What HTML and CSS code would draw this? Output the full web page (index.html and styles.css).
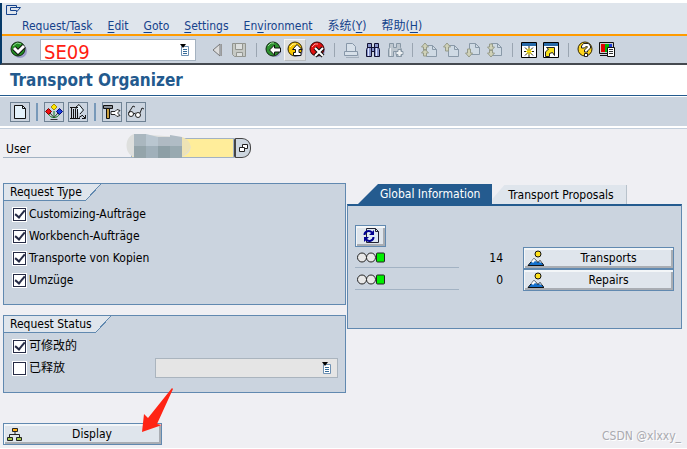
FILE: index.html
```html
<!DOCTYPE html>
<html lang="en">
<head>
<meta charset="utf-8">
<title>Transport Organizer</title>
<link rel="stylesheet" href="styles.css">
</head>
<body>
<header class="shell">
  <div class="menubar">
    <svg class="window-icon" width="15" height="10" viewBox="0 0 15 10" fill="none" stroke="#15428b"><path d="M10.500 2.500V.5H.5v9h10V7.500M4.500 2.500h10l-4 4.500V5.500h-6z"/></svg>
    <nav class="menus">
      <a href="#">Request/T<u>a</u>sk</a><a href="#"><u>E</u>dit</a><a href="#"><u>G</u>oto</a><a href="#"><u>S</u>ettings</a><a href="#">En<u>v</u>ironment</a><a href="#">系统(<u>Y</u>)</a><a href="#">帮助(<u>H</u>)</a>
    </nav>
  </div>
  <div class="toolbar">
    <button class="tool" aria-label="Enter"><svg width="18" height="18" viewBox="0 0 18 18"><circle cx="10" cy="10" r="7" fill="#9a9ac8"/><circle cx="8" cy="8" r="7" fill="#229122" stroke="#102810"/><path d="M3 5l4-3 4 1" stroke="#8fd88f" fill="none"/><path d="M4 7l4 4 6-6" fill="none" stroke="#111" stroke-width="5"/><path d="M4 7l4 4 6-6" fill="none" stroke="#fff" stroke-width="3"/></svg></button>
    <div class="command"><input class="command-input" aria-label="Command" value="SE09"><svg class="list-icon" width="10" height="12" viewBox="0 0 10 12"><path d="M1.500 2.500h7v9h-7z" fill="#fff" stroke="#6e91b3"/><path d="M3 5.500h4M3 7.500h4M3 9.500h4" stroke="#356b99"/><path d="M0 0h6L3 4z"/></svg></div>
    <button class="tool" aria-label="Collapse"><svg width="16" height="16" viewBox="0 0 16 16"><path d="M11 2v12L4 8z" fill="#ddd" stroke="#777"/><path d="M12.500 2v12" stroke="#999"/></svg></button>
    <button class="tool" aria-label="Save"><svg width="16" height="16" viewBox="0 0 16 16" fill="#c6c9c4" stroke="#92958f"><path d="M1.500 1.500h13v13h-11l-2-2z"/><path d="M4.500 1.500h7v6h-7zM5.500 10.500h6v4h-6z" fill="#dde0df"/></svg></button>
    <span class="sep"></span>
    <button class="tool" aria-label="Back"><svg width="17" height="17" viewBox="0 0 17 17"><circle cx="10" cy="10" r="6" fill="#9d9dcb"/><circle cx="8" cy="8" r="7" fill="#2d912f" stroke="#102810"/><path d="M3 5l3-3h3" stroke="#9cdb9a" fill="none"/><path d="M4.500 9l5-5v3h6v4h-6v3z" fill="#fff" stroke="#111"/></svg></button>
    <button class="tool tool-hover" aria-label="Exit"><svg width="17" height="17" viewBox="0 0 17 17"><circle cx="10" cy="10" r="6" fill="#9d9dcb"/><circle cx="8" cy="8" r="7" fill="#f6c500" stroke="#302500"/><path d="M3 6l3-3h3" stroke="#fff7a0" fill="none"/><path d="M10 3.500l5 5h-3v3h2v3H6.500v-3h2v-3h-3z" fill="#fff" stroke="#111"/></svg></button>
    <button class="tool" aria-label="Cancel"><svg width="17" height="17" viewBox="0 0 17 17"><circle cx="10" cy="10" r="6" fill="#9d9dcb"/><circle cx="8" cy="8" r="7" fill="#df1010" stroke="#300"/><path d="M3 6l3-3h3" stroke="#ff9d9d" fill="none"/><path d="M6 7l8 8M14 7l-8 8" stroke="#111" stroke-width="4"/><path d="M6 7l8 8M14 7l-8 8" stroke="#fff" stroke-width="2"/></svg></button>
    <span class="sep"></span>
    <button class="tool" aria-label="Print"><svg width="16" height="16" viewBox="0 0 16 16" fill="#d7e0e9" stroke="#8797a8"><path d="M3.500 9.500v-8h6l3 3v5"/><path d="M1.500 9.500h13v4h-13z"/><path d="M3 15.500h13v-4" fill="none" stroke="#a4b0bd"/></svg></button>
    <button class="tool" aria-label="Find"><svg width="16" height="16" viewBox="0 0 16 16" fill="#8794ca" stroke="#111133"><path d="M2.500 1.500h4v4h3v-4h4v4l1 2v7h-5v-5h-3v5h-5v-7l1-2z"/><path d="M3.500 6v8M11.500 6v8" stroke="#dfe5ff"/><path d="M6.500 5v5M9.500 5v5M2 5.500h5M9 5.500h5"/></svg></button>
    <button class="tool" aria-label="Find next"><svg width="17" height="16" viewBox="0 0 17 16" fill="#bdc6ce" stroke="#8797a5"><path d="M2.500 1.500h4v4h3v-4h4v4l1 2v7h-5v-5h-3v5h-5v-7l1-2z"/><path d="M3.500 6v8" stroke="#e8edf2"/><path d="M11 7.500h3v2h2v3h-2v2h-3v-2H9v-3h2z" fill="#edf0f2"/></svg></button>
    <span class="sep"></span>
    <button class="tool" aria-label="First page"><svg width="16" height="16" viewBox="0 0 16 16" fill="#cfdae4" stroke="#8999a8"><path d="M5.500 3.500h6l4 4v7h-10z"/><path d="M11.500 3.500v4h4" fill="none"/><path d="M4 1l3.500 4h-2v3h-3V5h-2zM4 7l3.500 4h-2v3h-3v-3h-2z" fill="#d0d2b8" stroke="#969b89"/></svg></button>
    <button class="tool" aria-label="Previous page"><svg width="16" height="16" viewBox="0 0 16 16" fill="#cfdae4" stroke="#8999a8"><path d="M5.500 3.500h6l4 4v7h-10z"/><path d="M11.500 3.500v4h4" fill="none"/><path d="M4 1l3.500 4h-2v4h-3V5h-2z" fill="#d0d2b8" stroke="#969b89"/></svg></button>
    <button class="tool" aria-label="Next page"><svg width="16" height="16" viewBox="0 0 16 16" fill="#cfdae4" stroke="#8999a8"><path d="M4.500 1.500h6l4 4v7h-10z"/><path d="M10.500 1.500v4h4" fill="none"/><path d="M4 15l3.500-4h-2V7h-3v4h-2z" fill="#d0d2b8" stroke="#969b89"/></svg></button>
    <button class="tool" aria-label="Last page"><svg width="16" height="16" viewBox="0 0 16 16" fill="#cfdae4" stroke="#8999a8"><path d="M4.500 1.500h6l4 4v8h-10z"/><path d="M10.500 1.500v4h4" fill="none"/><path d="M4 9l3.500-4h-2V2h-3v3h-2zM4 15l3.500-4h-2V8h-3v3h-2z" fill="#d0d2b8" stroke="#969b89"/></svg></button>
    <span class="sep"></span>
    <button class="tool" aria-label="New session"><svg width="16" height="16" viewBox="0 0 16 16"><path d="M.5.5h15v15H.5z" fill="#fff" stroke="#000"/><path d="M1 1h14v3H1z" fill="#286aa8"/><path d="M8 4v11M3 9.500h10M4 5.500l8 8M12 5.500l-8 8" stroke="#222"/><path d="M8 6v7M5 9.500h6M5.500 7l5 5M10.500 7l-5 5" stroke="#ffe400"/></svg></button>
    <button class="tool" aria-label="Create shortcut"><svg width="16" height="16" viewBox="0 0 16 16"><path d="M.5.5h15v15H.5z" fill="#fff" stroke="#000"/><path d="M1 1h14v3H1z" fill="#286aa8"/><path d="M2.500 14.500V10l3-3-2-1.500h8v8l-2-3-3 1v3z" fill="#f7e11b" stroke="#222"/></svg></button>
    <span class="sep"></span>
    <button class="tool" aria-label="Help"><svg width="17" height="17" viewBox="0 0 17 17"><circle cx="8" cy="8" r="7" fill="#ffd51b" stroke="#302500"/><path d="M4.500 7V5l2-2.500h5l2 2.500v2l-3 3v1h-3V9l3-3-1-1-2 2zM7.500 12.500h3v3h-3z" fill="#fff" stroke="#222"/></svg></button>
    <button class="tool" aria-label="Customize layout"><svg width="17" height="17" viewBox="0 0 17 17"><path d="M.5 1.500h14v11H.5z" fill="#ccc" stroke="#111"/><path d="M2 3h4v8H2z" fill="#e00000"/><path d="M6 3h4v8H6z" fill="#00b400"/><path d="M10 3h3v8h-3z" fill="#1539d8"/><path d="M1 14.500h9" stroke="#111"/><path d="M8.500 6.500h7v9h-7z" fill="#fff" stroke="#111"/><path d="M10 8.500h4M10 10.500h4M10 12.500h4" stroke="#333"/></svg></button>
  </div>
</header>
<h1 class="title">Transport Organizer</h1>
<div class="appbar">
  <button class="app-tool" aria-label="Create"><svg width="16" height="16" viewBox="0 0 16 16"><path d="M2.500 1.500h8l3 3v10h-11z" fill="#e4f2fb" stroke="#111"/><path d="M10.500 1.500v3h3" fill="none" stroke="#111"/></svg></button>
  <span class="app-sep"></span>
  <button class="app-tool" aria-label="Transport view"><svg width="18" height="16" viewBox="0 0 18 16"><path d="M9 7v6M3.500 9.500c1 3 3 4 5.500 4s4.500-1 5.500-4" fill="none" stroke="#0a7a1c"/><path d="M5.500 15.500h7M9 13.500L5 9M9 13.500L13 9" fill="none" stroke="#333"/><path d="M9 0l3 3-3 3-3-3z" fill="#ffe600" stroke="#a58b00"/><path d="M3.500 4.500l3 3-3 3-3-3z" fill="#f01010" stroke="#700"/><path d="M14.500 4.500l3 3-3 3-3-3z" fill="#1742e0" stroke="#007"/></svg></button>
  <button class="app-tool" aria-label="Release directly"><svg width="18" height="16" viewBox="0 0 18 16" fill="none" stroke="#111"><path d="M7 5V3l3-2.500L14.500 6 11 10" fill="#e4f2fb"/><path d="M1 3.500h8M2.500 4v10M4.500 5v9M6.500 5v9M8.500 5v9M1 14.500h10M10 13.500l3-2"/><path d="M13 11l3 3M16.500 11v3.500H13"/></svg></button>
  <span class="app-sep"></span>
  <button class="app-tool" aria-label="Tools"><svg width="18" height="16" viewBox="0 0 18 16"><path d="M8 7.500h4l2-2 3 1-2 2v1l2 2-3 1-2-2H8z" fill="#fff" stroke="#222"/><path d="M.5 1.500h9v3h-9z" fill="#8a9098" stroke="#111"/><path d="M3.500 4.500h3v10h-3z" fill="#c9a040" stroke="#111"/></svg></button>
  <button class="app-tool" aria-label="Display object"><svg width="18" height="16" viewBox="0 0 18 16" fill="none" stroke="#222"><circle cx="4" cy="10" r="2.500" fill="#fff"/><circle cx="11" cy="11" r="2.500" fill="#fff"/><path d="M1.500 9L6 2l2 1M6.500 10l2-1M13 9l2-5 2 1"/></svg></button>
</div>
<main class="content">
  <div class="user-row">
    <label class="user-label" for="user">User</label>
    <div class="user-field">
      <input class="user-input" id="user">
      <svg class="mask" width="66" height="25" viewBox="0 0 66 25"><path d="M8 0C-2 3-2 20 8 23h46c14-3 14-16 0-20z" fill="#dedfdd"/><path d="M56 3c11 4 11 14 0 19z" fill="#eee3b5"/><path d="M8 0h12v12H8z" fill="#aab7bf"/><path d="M20 0l12 3v9H20z" fill="#b9c6d0"/><path d="M32 3h12v9H32z" fill="#afbac3"/><path d="M44 1l12 2v9H44z" fill="#b0bcc5"/><path d="M8 12h12v12H8z" fill="#94a4aa"/><path d="M20 12h12v12H20z" fill="#a0b0ba"/><path d="M32 12h12v12H32z" fill="#8d9fa6"/><path d="M44 12h12v12H44z" fill="#98a9b0"/></svg>
    </div>
    <button class="user-help" aria-label="Choose user"><svg width="9" height="8" viewBox="0 0 9 8" fill="#fff" stroke="#222"><path d="M3.500.5h5v4h-5z"/><path d="M.5 3.500h5v4h-5z"/></svg></button>
  </div>
  <div class="columns">
    <div class="left">
      <section class="group">
        <h2 class="group-title">Request Type</h2>
        <div class="checks">
          <label class="check"><input type="checkbox" checked>Customizing-Aufträge</label>
          <label class="check"><input type="checkbox" checked>Workbench-Aufträge</label>
          <label class="check"><input type="checkbox" checked>Transporte von Kopien</label>
          <label class="check"><input type="checkbox" checked>Umzüge</label>
        </div>
      </section>
      <section class="group">
        <h2 class="group-title">Request Status</h2>
        <div class="checks">
          <label class="check"><input type="checkbox" checked>可修改的</label>
          <div class="released">
            <label class="check"><input type="checkbox">已释放</label>
            <div class="period"><select class="period-select" aria-label="Release period" disabled><option></option></select><svg class="list-icon" width="10" height="12" viewBox="0 0 10 12"><path d="M1.500 2.500h7v9h-7z" fill="#fff" stroke="#6e91b3"/><path d="M3 5.500h4M3 7.500h4M3 9.500h4" stroke="#356b99"/><path d="M0 0h6L3 4z"/></svg></div>
          </div>
        </div>
      </section>
    </div>
    <section class="right">
      <div class="tabs" role="tablist">
        <button class="tab tab-active" role="tab" aria-selected="true">Global Information</button>
        <button class="tab" role="tab" aria-selected="false">Transport Proposals</button>
      </div>
      <div class="panel">
        <button class="raised refresh" aria-label="Refresh"><svg width="17" height="16" viewBox="0 0 17 16"><path d="M4.500.5h9l3 3v11h-12z" fill="#dfeaf4" stroke="#223"/><path d="M13.500.5v3h3" fill="none" stroke="#223"/><path d="M2.500 7c0-4 5-5 7.500-2.500M11.500 9c0 4-5 5-7.500 2.500" fill="none" stroke="#000090" stroke-width="2"/><path d="M12 2v5H7zM2 14V9h5z" fill="#000090"/></svg></button>
        <div class="stat">
          <div class="stat-light"><svg width="28" height="11" viewBox="0 0 28 11" stroke="#222"><circle cx="5" cy="5.500" r="4.500" fill="#e8e8e8"/><circle cx="14" cy="5.500" r="4.500" fill="#e8e8e8"/><rect x="19.500" y="1" width="8" height="9" rx="1" fill="#00ef00"/></svg></div>
          <span class="stat-value">14</span>
          <button class="raised wide"><svg class="wide-icon" width="17" height="17" viewBox="0 0 17 17"><circle cx="11" cy="4" r="3" fill="#ffe11b" stroke="#111"/><path d="M1 15.500l6-7 4 4 2-2 4 5z" fill="#1671cc" stroke="#111"/><path d="M4 12l3-3.500 3 3.500-2-1-2 2-1-1zM12 12l1-1 2 2z" fill="#fff"/></svg><span>Transports</span></button>
        </div>
        <div class="stat">
          <div class="stat-light"><svg width="28" height="11" viewBox="0 0 28 11" stroke="#222"><circle cx="5" cy="5.500" r="4.500" fill="#e8e8e8"/><circle cx="14" cy="5.500" r="4.500" fill="#e8e8e8"/><rect x="19.500" y="1" width="8" height="9" rx="1" fill="#00ef00"/></svg></div>
          <span class="stat-value">0</span>
          <button class="raised wide"><svg class="wide-icon" width="17" height="17" viewBox="0 0 17 17"><circle cx="11" cy="4" r="3" fill="#ffe11b" stroke="#111"/><path d="M1 15.500l6-7 4 4 2-2 4 5z" fill="#1671cc" stroke="#111"/><path d="M4 12l3-3.500 3 3.500-2-1-2 2-1-1zM12 12l1-1 2 2z" fill="#fff"/></svg><span>Repairs</span></button>
        </div>
      </div>
    </section>
  </div>
  <div class="actions">
    <button class="raised display"><svg class="wide-icon" width="16" height="15" viewBox="0 0 16 15"><path d="M8 5v3M2.500 10V7.500h10V10" fill="none" stroke="#222"/><path d="M5.500 1.500h5v3h-5z" fill="#ffae16" stroke="#222"/><path d="M.5 10.500h5v3h-5zM9.500 10.500h5v3h-5z" fill="#a5c84c" stroke="#222"/></svg><span>Display</span></button>
    <svg class="arrow" width="32" height="44" viewBox="0 0 32 44"><path d="M31 0l1 1-16 35 5 1-20 7 2-18 4 4z" fill="#ff2414"/></svg>
  </div>
  <span class="watermark">CSDN @xlxxy_</span>
</main>
</body>
</html>
```
FILE: styles.css
```css
* { box-sizing: border-box; }
body {
  margin: 0;
  padding: 3px 0 1px;
  min-height: 100vh;
  display: flex;
  flex-direction: column;
  background: #fff;
  color: #000;
  font: 12px/16px "DejaVu Sans Condensed", "DejaVu Sans", "Noto Sans CJK SC", sans-serif;
}
button, input, select { font: inherit; color: inherit; margin: 0; }
button { padding: 0; border: 0; background: none; }
svg { display: block; flex: none; }

.shell { border-left: 2px solid #063a68; border-bottom: 2px solid #454a50; }
.menubar { height: 31px; padding: 2px 4px 0; background: #dfe5ec; }
.menus { display: flex; gap: 15px; padding: 2px 16px 0; line-height: 18px; white-space: nowrap; }
.menus a { color: #15428b; text-decoration: none; }
.menus u { text-underline-offset: 2px; }
.toolbar {
  display: flex;
  align-items: center;
  height: 29px;
  padding-left: 6px;
  border-top: 2px solid #ff9b00;
  background: #cbd4df;
}
.tool { display: flex; align-items: center; justify-content: center; width: 22px; height: 22px; flex: none; }
.tool-hover { border: 1px solid; border-color: #f5f5f5 #b8bcc0 #b8bcc0 #f5f5f5; background: #dedfdf; }
.sep { flex: none; width: 1px; height: 14px; margin: 0 5px 0 6px; background: #9aa5b1; }
.command { display: flex; align-items: center; flex: none; width: 156px; height: 22px; margin: 0 10px; padding-right: 5px; border: 1px solid #a4b2c0; background: #fff; }
.command-input { flex: 1; min-width: 0; height: 20px; padding: 4px 3px 0; border: 0; outline: 0; background: none; color: #ff1d12; font-size: 20px; line-height: 16px; }

.title { margin: 0; padding: 5px 10px; border-bottom: 1px solid #235a8e; color: #235a8e; font: bold 17px/20px "DejaVu Sans Condensed", "DejaVu Sans", sans-serif; }
.appbar { display: flex; align-items: center; gap: 4px; height: 32px; padding: 0 10px; border-top: 1px solid #fff; border-bottom: 2px solid #fff; background: #cbd4df; }
.app-tool { display: flex; align-items: center; justify-content: center; width: 20px; height: 20px; border: 1px solid #6f8294; }
.app-sep { width: 2px; height: 18px; margin: 0 2px; background: #7899b9; }

.content { position: relative; flex: 1; padding: 9px 5px 0 3px; border-top: 1px solid #c2cedc; background: #efeff3; }
.user-row { display: flex; height: 20px; }
.user-label { width: 128px; padding: 3px 3px 0; border-bottom: 1px solid #a2b2c3; }
.user-field { position: relative; width: 103px; }
.user-input { width: 100%; height: 20px; border: 1px solid #a2b2c3; background: #ffed9a; }
.mask { position: absolute; left: -5px; top: -4px; }
.user-help { display: flex; align-items: center; justify-content: center; width: 17px; height: 20px; border: 1px solid #444; border-left-width: 2px; border-radius: 2px 9px 9px 2px; background: #cdd6df; }

.columns { display: grid; grid-template-columns: 343fr 335fr; gap: 1px; align-items: start; margin-top: 25px; }
.left { display: grid; gap: 10px; }
.group { padding-bottom: 13px; border: 1px solid #6189b0; background: #cbd4df; }
.group-title { display: flex; gap: 3px; width: max-content; margin: 0; padding-left: 6px; background: linear-gradient(#6189b0, #6189b0) 0 100% / calc(100% - 16px) 1px no-repeat, linear-gradient(#dfe5ec, #dfe5ec) 0 0 / calc(100% - 16px) 100% no-repeat; font: inherit; }
.group-title::after { content: ""; width: 16px; height: 17px; background: linear-gradient(to bottom right, #dfe5ec 48%, #6189b0 48% 52%, transparent 52%); }
.checks { padding: 2px 7px 0 8px; }
.check { display: flex; align-items: center; gap: 2px; height: 22px; }
.check input { appearance: none; display: grid; place-items: center; width: 15px; height: 15px; border: 1px solid #fff; outline: 1px solid #262b45; outline-offset: -2px; background: #fff; }
.check input:checked::before { content: ""; width: 4px; height: 8px; margin-bottom: 2px; border: solid #262b45; border-width: 0 2px 2px 0; transform: rotate(40deg); }
.released { display: flex; justify-content: space-between; align-items: center; }
.period { display: flex; align-items: center; width: 183px; height: 20px; padding-right: 5px; border: 1px solid #aab4be; background: #e5e5e5; }
.period-select { flex: 1; min-width: 0; appearance: none; border: 0; background: none; }

.tabs { display: flex; margin-top: 1px; }
.tab { height: 19px; margin-top: 1px; padding: 0 12px 0 16px; background: #dfe5ec; border-right: 1px solid #a0adb9; clip-path: polygon(12px 0, 100% 0, 100% 100%, 0 100%, 0 14px); }
.tab-active { height: 20px; margin: 0 0 0 11px; padding: 0 12px 0 22px; border: 0; background: #245b8f; color: #fff; clip-path: polygon(20px 0, 100% 0, 100% 100%, 0 100%); }
.panel { min-height: 125px; padding: 19px 7px; border: 1px solid #6189b0; border-top: 2px solid #245b8f; background: #cbd4df; }
.raised { display: flex; align-items: center; height: 22px; border: 1px solid #6189b0; background: #dfe5ec; box-shadow: inset 1px 2px #f3f6f8, inset -2px -2px #a9adb3; }
.refresh { width: 31px; justify-content: center; }
.stat { display: flex; }
.stat-light { width: 104px; height: 21px; padding: 5px 2px 0; border-bottom: 1px solid #a2b2c3; }
.stat-value { flex: 1; padding: 3px 20px 0 0; text-align: right; }
.wide { width: 151px; }
.raised span { flex: 1; text-align: center; }
.wide-icon { margin-left: 3px; }

.actions { position: relative; width: 159px; margin-top: 30px; }
.display { width: 100%; }
.arrow { position: absolute; left: 138px; top: -35px; }
.watermark { position: absolute; right: 6px; bottom: 4px; color: #aaaab0; text-shadow: 1px 1px #fff; }
```
